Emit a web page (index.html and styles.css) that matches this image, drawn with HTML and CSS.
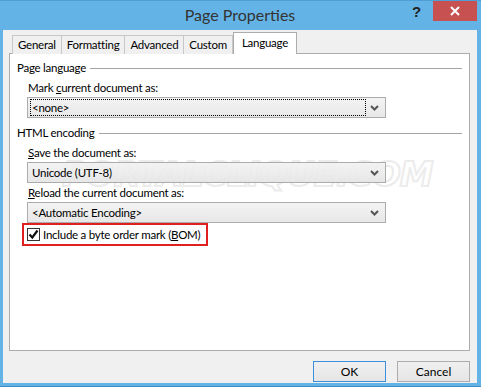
FILE: index.html
```html
<!DOCTYPE html>
<html lang="en">
<head>
  <meta charset="UTF-8" />
  <title>Page Properties</title>
  <link rel="stylesheet" href="styles.css">
</head>
<body>
  <div class="window">
    <div class="titlebar">
      <div class="title">Page Properties</div>
      <div class="help">?</div>
      <div class="close">
        <svg width="10" height="10" viewBox="0 0 10 10"><path d="M1 1 L9 9 M9 1 L1 9" stroke="#fff" stroke-width="2"/></svg>
      </div>
    </div>

    <div class="client">
      <div class="tabs">
        <div class="tab">General</div>
        <div class="tab">Formatting</div>
        <div class="tab">Advanced</div>
        <div class="tab">Custom</div>
        <div class="tab active">Language</div>
      </div>

      <div class="panel">
        <div class="watermark">PORTALCLIQUE.COM</div>

        <div class="group-title">Page language</div>
        <div class="field-label">Mark <u>c</u>urrent document as:</div>
        <div class="select focused">
          <span class="value">&lt;none&gt;</span>
          <svg class="chevron" width="9" height="6" viewBox="0 0 9 6"><path d="M1 1 L4.5 4.5 L8 1" fill="none" stroke="#555" stroke-width="2"/></svg>
        </div>

        <div class="group-title second">HTML encoding</div>
        <div class="field-label"><u>S</u>ave the document as:</div>
        <div class="select">
          <span class="value">Unicode (UTF-8)</span>
          <svg class="chevron" width="9" height="6" viewBox="0 0 9 6"><path d="M1 1 L4.5 4.5 L8 1" fill="none" stroke="#555" stroke-width="2"/></svg>
        </div>
        <div class="field-label tight"><u>R</u>eload the current document as:</div>
        <div class="select">
          <span class="value">&lt;Automatic Encoding&gt;</span>
          <svg class="chevron" width="9" height="6" viewBox="0 0 9 6"><path d="M1 1 L4.5 4.5 L8 1" fill="none" stroke="#555" stroke-width="2"/></svg>
        </div>

        <div class="highlight">
          <span class="checkbox">
            <svg width="11" height="11" viewBox="0 0 11 11"><path d="M1.5 5.5 L4.3 8.5 L9.5 1.5" fill="none" stroke="#111" stroke-width="2.2"/></svg>
          </span>
          <span>Include a byte order mark (<u>B</u>OM)</span>
        </div>
      </div>

      <div class="buttons">
        <button class="btn default">OK</button>
        <button class="btn">Cancel</button>
      </div>
    </div>
  </div>
</body>
</html>
```

FILE: styles.css
```css
html, body {
  margin: 0;
  padding: 0;
  background: #63b3e6;
  font-family: 'Lato', 'Liberation Sans', sans-serif;
  font-size: 11.5px;
  letter-spacing: -0.25px;
  color: #000;
  overflow: hidden;
}

.window {
  width: 481px;
  height: 387px;
  box-sizing: border-box;
  display: flex;
  flex-direction: column;
  background: #63b3e6;
  border-top: 1px solid #4f9fd6;
  border-bottom: 1px solid #3f8fc6;
  padding: 0 4px 3px 3px;
}

.titlebar {
  height: 29px;
  position: relative;
  display: flex;
  justify-content: center;
  align-items: center;
}

.title {
  font-size: 16px;
  letter-spacing: 0;
  color: #333;
  margin-top: -2px;
}

.help {
  position: absolute;
  right: 56px;
  top: 2px;
  font-family: 'Liberation Sans', sans-serif;
  font-weight: bold;
  font-size: 15px;
  color: #222;
}

.close {
  position: absolute;
  right: 0;
  top: 0;
  width: 44px;
  height: 20px;
  background: #c75050;
  display: flex;
  justify-content: center;
  align-items: center;
}

.client {
  flex: 1;
  background: #f0f0f0;
  padding: 2px 7px 0 6px;
  display: flex;
  flex-direction: column;
}

.tabs {
  display: flex;
  align-items: flex-end;
  padding-left: 3px;
  height: 22px;
  margin-bottom: -1px;
  position: relative;
  z-index: 1;
}

.tab {
  height: 18px;
  line-height: 18px;
  padding: 0 5px;
  border: 1px solid #c8c8c8;
  border-bottom: none;
  background: #f0f0f0;
  color: #000;
  margin-right: -1px;
}

.tab.active {
  height: 21px;
  line-height: 20px;
  background: #fff;
  border-color: #acacac;
  padding: 0 8px;
  margin-left: 1px;
}

.panel {
  height: 290px;
  background: #fff;
  border: 1px solid #acacac;
  padding: 6px 7px 0 7px;
  position: relative;
  overflow: hidden;
}

.group-title {
  display: flex;
  align-items: center;
  line-height: 16px;
  position: relative;
}

.group-title::after {
  content: "";
  flex: 1;
  height: 1px;
  background: #a5a5a5;
  margin-left: 4px;
}

.group-title.second {
  margin-top: 7px;
}

.field-label {
  line-height: 16px;
  margin: 4px 0 1px 11px;
  position: relative;
}

.field-label.tight {
  margin-top: 2px;
}

.select {
  margin-left: 10px;
  width: 359px;
  height: 21px;
  box-sizing: border-box;
  border: 1px solid #acacac;
  background: linear-gradient(rgba(242, 242, 242, 0.9), rgba(229, 229, 229, 0.9));
  display: flex;
  align-items: center;
  padding: 0 0 0 3px;
  position: relative;
}

.select .value {
  flex: 1;
  line-height: 15px;
  padding-left: 1px;
}

.select.focused .value {
  outline: 1px dotted #000;
  margin: 2px 20px 2px 0;
}

.chevron {
  position: absolute;
  right: 6px;
  top: 7px;
}

.highlight {
  display: flex;
  align-self: flex-start;
  width: max-content;
  align-items: center;
  margin-left: 5px;
  height: 23px;
  box-sizing: border-box;
  border: 2px solid #e01f1f;
  padding: 0 6px 0 3px;
  white-space: nowrap;
  position: relative;
}

.checkbox {
  width: 13px;
  height: 13px;
  box-sizing: border-box;
  border: 1px solid #333;
  background: #fff;
  display: flex;
  justify-content: center;
  align-items: center;
  margin-right: 3px;
}

.watermark {
  position: absolute;
  left: 52px;
  top: 100px;
  font-family: 'DejaVu Sans', sans-serif;
  font-weight: bold;
  font-style: italic;
  font-size: 34px;
  letter-spacing: -1px;
  white-space: nowrap;
  color: rgba(255, 255, 255, 0.3);
  -webkit-text-stroke: 2px #ececec;
  pointer-events: none;
}

.buttons {
  display: flex;
  justify-content: flex-end;
  gap: 11px;
  margin-top: 10px;
}

.btn {
  width: 73px;
  height: 21px;
  border: 1px solid #acacac;
  background: linear-gradient(#f0f0f0, #e5e5e5);
  font-family: inherit;
  font-size: 12px;
  color: #000;
  padding: 0;
}

.btn.default {
  border-color: #3c8fdc;
}
```
